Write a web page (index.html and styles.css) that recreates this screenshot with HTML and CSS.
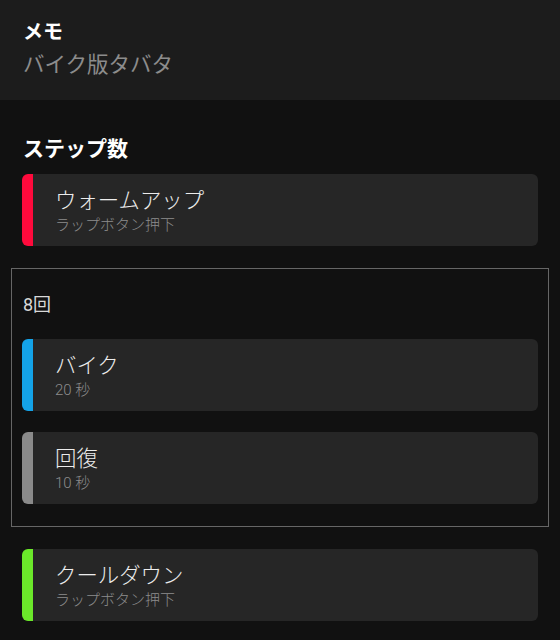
FILE: index.html
```html
<!DOCTYPE html>
<html lang="ja">
<head>
    <meta charset="UTF-8">
    <meta name="viewport" content="width=device-width, initial-scale=1.0">
    <title>バイク版タバタ</title>
    <link rel="stylesheet" href="styles.css">
</head>
<body>
    <header class="memo">
        <p class="memo-label">メモ</p>
        <p class="memo-value">バイク版タバタ</p>
    </header>

    <main class="steps">
        <h2 class="steps-title">ステップ数</h2>

        <div class="step step-warmup">
            <p class="step-name">ウォームアップ</p>
            <p class="step-detail">ラップボタン押下</p>
        </div>

        <div class="repeat">
            <p class="repeat-count">8回</p>
            <div class="step step-bike">
                <p class="step-name">バイク</p>
                <p class="step-detail">20 秒</p>
            </div>
            <div class="step step-rest">
                <p class="step-name">回復</p>
                <p class="step-detail">10 秒</p>
            </div>
        </div>

        <div class="step step-cooldown">
            <p class="step-name">クールダウン</p>
            <p class="step-detail">ラップボタン押下</p>
        </div>
    </main>
</body>
</html>
```

FILE: styles.css
```css
:root {
    --page-bg: #111111;
    --header-bg: #1c1c1c;
    --card-bg: #262626;
    --text-main: #ececec;
    --text-dim: #8c8c8c;
    --warmup-color: #ff0a3c;
    --bike-color: #14a3e8;
    --rest-color: #8a8a8a;
    --cooldown-color: #6be82a;
}

body {
    margin: 0;
    font-family: Roboto, "Noto Sans CJK JP", sans-serif;
    background-color: var(--page-bg);
    color: var(--text-main);
    width: 560px;
    height: 640px;
    overflow: hidden;
}

p, h2 {
    margin: 0;
}

.memo {
    background-color: var(--header-bg);
    height: 100px;
    box-sizing: border-box;
    padding: 14px 23px 0;
}

.memo-label {
    font-size: 20px;
    font-weight: bold;
    line-height: 36px;
    color: #ffffff;
}

.memo-value {
    font-size: 21.5px;
    line-height: 30px;
    color: var(--text-dim);
}

.steps {
    padding-top: 34px;
}

.steps-title {
    font-size: 21px;
    font-weight: bold;
    line-height: 30px;
    color: #ffffff;
    margin: 0 23px 10px;
}

.step {
    display: flex;
    flex-direction: column;
    height: 72px;
    box-sizing: border-box;
    margin: 0 22px;
    padding: 14px 0 0 22px;
    background-color: var(--card-bg);
    border-radius: 6px;
    border-left: 11px solid var(--rest-color);
}

.step-warmup { border-left-color: var(--warmup-color); }
.step-bike { border-left-color: var(--bike-color); }
.step-rest { border-left-color: var(--rest-color); }
.step-cooldown { border-left-color: var(--cooldown-color); }

.step-name {
    font-size: 21.4px;
    font-weight: 300;
    line-height: 26px;
}

.step-detail {
    font-size: 15px;
    font-weight: 300;
    line-height: 22px;
    color: var(--text-dim);
}

.repeat {
    margin: 22px 11px;
    padding: 24px 10px 22px;
    border: 1px solid #666666;
    display: flex;
    flex-direction: column;
    gap: 21px;
}

.repeat .step {
    margin: 0;
}

.repeat-count {
    font-size: 18px;
    line-height: 24px;
    color: #d8d8d8;
    padding-left: 1px;
    margin-bottom: 1px;
}
```
